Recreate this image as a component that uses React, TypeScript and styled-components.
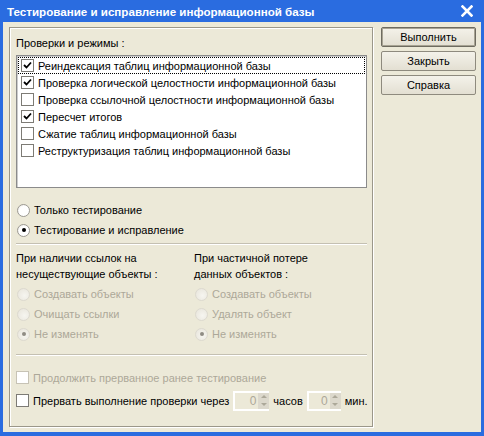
import { createGlobalStyle } from 'styled-components'
import styled from 'styled-components'

const Global = createGlobalStyle`
  body {
    margin: 0;
    font-family: 'Liberation Sans', Arial, sans-serif;
    font-size: 11px;
    background: #ece9d8;
  }
`

const Window = styled.div`
  width: 484px;
  height: 436px;
  box-sizing: border-box;
  background: #2a6ce0;
  display: flex;
  flex-direction: column;
  padding: 0 3px 4px 3px;
`

const TitleBar = styled.div`
  height: 22px;
  display: flex;
  align-items: center;
  justify-content: space-between;
  padding: 0 8px 0 4px;
  color: #fff;
  font-weight: bold;
  font-size: 11.6px;
`

const Body = styled.div`
  flex: 1;
  background: #ece9d8;
  display: flex;
  gap: 8px;
  padding: 5px 7px 5px 6px;
`

const Frame = styled.div`
  width: 364px;
  box-sizing: border-box;
  border: 1px solid #9b9789;
  box-shadow: inset 1px 1px 0 #fff, 1px 1px 0 #fff;
  padding: 7px 5px 0 6px;
  display: flex;
  flex-direction: column;
`

const Label = styled.div<{ $disabled?: boolean }>`
  color: ${(p) => (p.$disabled ? '#aca899' : '#000')};
  line-height: 16px;
  white-space: nowrap;
`

const ListBox = styled.div`
  margin-top: 4px;
  height: 133px;
  box-sizing: border-box;
  background: #fff;
  border: 1px solid #8b8b8b;
  box-shadow: inset 1px 1px 0 #ccc;
  padding: 1px 1px;
`

const ListRow = styled.div<{ $focus?: boolean }>`
  height: 17px;
  box-sizing: border-box;
  display: flex;
  align-items: center;
  gap: 4px;
  padding-left: 2px;
  border: 1px dotted ${(p) => (p.$focus ? '#000' : 'transparent')};
`

const Box = styled.span<{ $disabled?: boolean }>`
  width: 13px;
  height: 13px;
  box-sizing: border-box;
  flex: none;
  background: #fff;
  border: 1px solid ${(p) => (p.$disabled ? '#c7c3b5' : '#7d7b75')};
  display: flex;
  align-items: center;
  justify-content: center;
`

const Radio = styled.span<{ $disabled?: boolean }>`
  width: 13px;
  height: 13px;
  box-sizing: border-box;
  flex: none;
  border-radius: 50%;
  border: 1px solid ${(p) => (p.$disabled ? '#dcd9cf' : '#9c9a93')};
  background: ${(p) =>
    p.$disabled ? 'radial-gradient(circle at 60% 60%, #f6f5f0, #e7e4da)' : 'radial-gradient(circle at 60% 60%, #fff 55%, #e2e0da)'};
  display: flex;
  align-items: center;
  justify-content: center;
`

const Dot = styled.span<{ $disabled?: boolean }>`
  width: 4px;
  height: 4px;
  border-radius: 50%;
  background: ${(p) => (p.$disabled ? '#8f8c84' : '#000')};
`

const Option = styled.div<{ $disabled?: boolean }>`
  display: flex;
  align-items: center;
  gap: 4px;
  height: 20px;
  padding-left: 1px;
  color: ${(p) => (p.$disabled ? '#aca899' : '#000')};
  white-space: nowrap;
`

const Spacer = styled.div<{ $h: number }>`
  height: ${(p) => p.$h}px;
`

const Sep = styled.div`
  height: 1px;
  background: #c4c0b2;
  border-bottom: 1px solid #fff;
`

const Columns = styled.div`
  display: grid;
  grid-template-columns: 178px 1fr;
`

const Col = styled.div`
  display: flex;
  flex-direction: column;
`

const ColHead = styled.div`
  margin-bottom: 2px;
`

const CheckLine = styled.div<{ $disabled?: boolean }>`
  display: flex;
  align-items: center;
  gap: 4px;
  height: 23px;
  color: ${(p) => (p.$disabled ? '#aca899' : '#000')};
  white-space: nowrap;
`

const Spin = styled.div<{ $w: number }>`
  display: grid;
  grid-template-columns: 1fr 11px;
  flex: none;
  width: ${(p) => p.$w}px;
  height: 20px;
  box-sizing: border-box;
  border: 2px solid #fff;
  border-right-width: 0;
  background: #ece9d8;
`

const SpinValue = styled.div`
  text-align: right;
  color: #aca899;
  padding-right: 2px;
  line-height: 16px;
  font-size: 12px;
`

const SpinBtns = styled.div`
  background: #dcd8cc;
  display: flex;
  flex-direction: column;
  align-items: center;
  justify-content: space-around;
`

const Tri = styled.span<{ $up?: boolean }>`
  width: 0;
  height: 0;
  border-left: 3px solid transparent;
  border-right: 3px solid transparent;
  ${(p) => (p.$up ? 'border-bottom: 3px solid #aca899;' : 'border-top: 3px solid #aca899;')}
`

const Buttons = styled.div`
  display: flex;
  flex-direction: column;
  gap: 4px;
`

const Button = styled.button<{ $default?: boolean }>`
  width: 95px;
  height: 20px;
  font-family: 'Liberation Sans', Arial, sans-serif;
  font-size: 11px;
  color: #000;
  padding: 0;
  border-radius: 2px;
  background: linear-gradient(#f4f2ea, #e3dfd2);
  border: 1px solid ${(p) => (p.$default ? '#6e6b60' : '#8e8a7e')};
  box-shadow: ${(p) => (p.$default ? 'inset 0 0 0 1px #a7a393' : 'none')};
`

const Check = () => (
  <svg width="9" height="9" viewBox="0 0 9 9">
    <path d="M1 4 L3.5 6.5 L8 1.5" stroke="#000" strokeWidth="1.8" fill="none" />
  </svg>
)

const CloseIcon = () => (
  <svg width="12" height="12" viewBox="0 0 12 12">
    <path d="M1.5 1.5 L10.5 10.5 M10.5 1.5 L1.5 10.5" stroke="#fff" strokeWidth="2.6" strokeLinecap="square" />
  </svg>
)

const checks = [
  { t: 'Реиндексация таблиц информационной базы', on: true },
  { t: 'Проверка логической целостности информационной базы', on: true },
  { t: 'Проверка ссылочной целостности информационной базы', on: false },
  { t: 'Пересчет итогов', on: true },
  { t: 'Сжатие таблиц информационной базы', on: false },
  { t: 'Реструктуризация таблиц информационной базы', on: false },
]

const RadioOpt = ({ text, on, disabled }: { text: string; on?: boolean; disabled?: boolean }) => (
  <Option $disabled={disabled}>
    <Radio $disabled={disabled}>{on && <Dot $disabled={disabled} />}</Radio>
    {text}
  </Option>
)

const SpinBox = ({ w }: { w: number }) => (
  <Spin $w={w}>
    <SpinValue>0</SpinValue>
    <SpinBtns>
      <Tri $up />
      <Tri />
    </SpinBtns>
  </Spin>
)

export default function App() {
  return (
    <>
      <Global />
      <Window>
        <TitleBar>
          <span>Тестирование и исправление информационной базы</span>
          <CloseIcon />
        </TitleBar>
        <Body>
          <Frame>
            <Label>Проверки и режимы :</Label>
            <ListBox>
              {checks.map((c, i) => (
                <ListRow key={i} $focus={i === 0}>
                  <Box>{c.on && <Check />}</Box>
                  {c.t}
                </ListRow>
              ))}
            </ListBox>
            <Spacer $h={12} />
            <RadioOpt text="Только тестирование" />
            <RadioOpt text="Тестирование и исправление" on />
            <Spacer $h={3} />
            <Sep />
            <Spacer $h={5} />
            <Columns>
              <Col>
                <ColHead>
                  <Label>При наличии ссылок на</Label>
                  <Label>несуществующие объекты :</Label>
                </ColHead>
                <RadioOpt text="Создавать объекты" disabled />
                <RadioOpt text="Очищать ссылки" disabled />
                <RadioOpt text="Не изменять" on disabled />
              </Col>
              <Col>
                <ColHead>
                  <Label>При частичной потере</Label>
                  <Label>данных объектов :</Label>
                </ColHead>
                <RadioOpt text="Создавать объекты" disabled />
                <RadioOpt text="Удалять объект" disabled />
                <RadioOpt text="Не изменять" on disabled />
              </Col>
            </Columns>
            <Spacer $h={10} />
            <Sep />
            <Spacer $h={10} />
            <CheckLine $disabled>
              <Box $disabled />
              Продолжить прерванное ранее тестирование
            </CheckLine>
            <CheckLine>
              <Box />
              Прервать выполнение проверки через
              <SpinBox w={36} />
              часов
              <SpinBox w={34} />
              мин.
            </CheckLine>
          </Frame>
          <Buttons>
            <Button $default>Выполнить</Button>
            <Button>Закрыть</Button>
            <Button>Справка</Button>
          </Buttons>
        </Body>
      </Window>
    </>
  )
}
